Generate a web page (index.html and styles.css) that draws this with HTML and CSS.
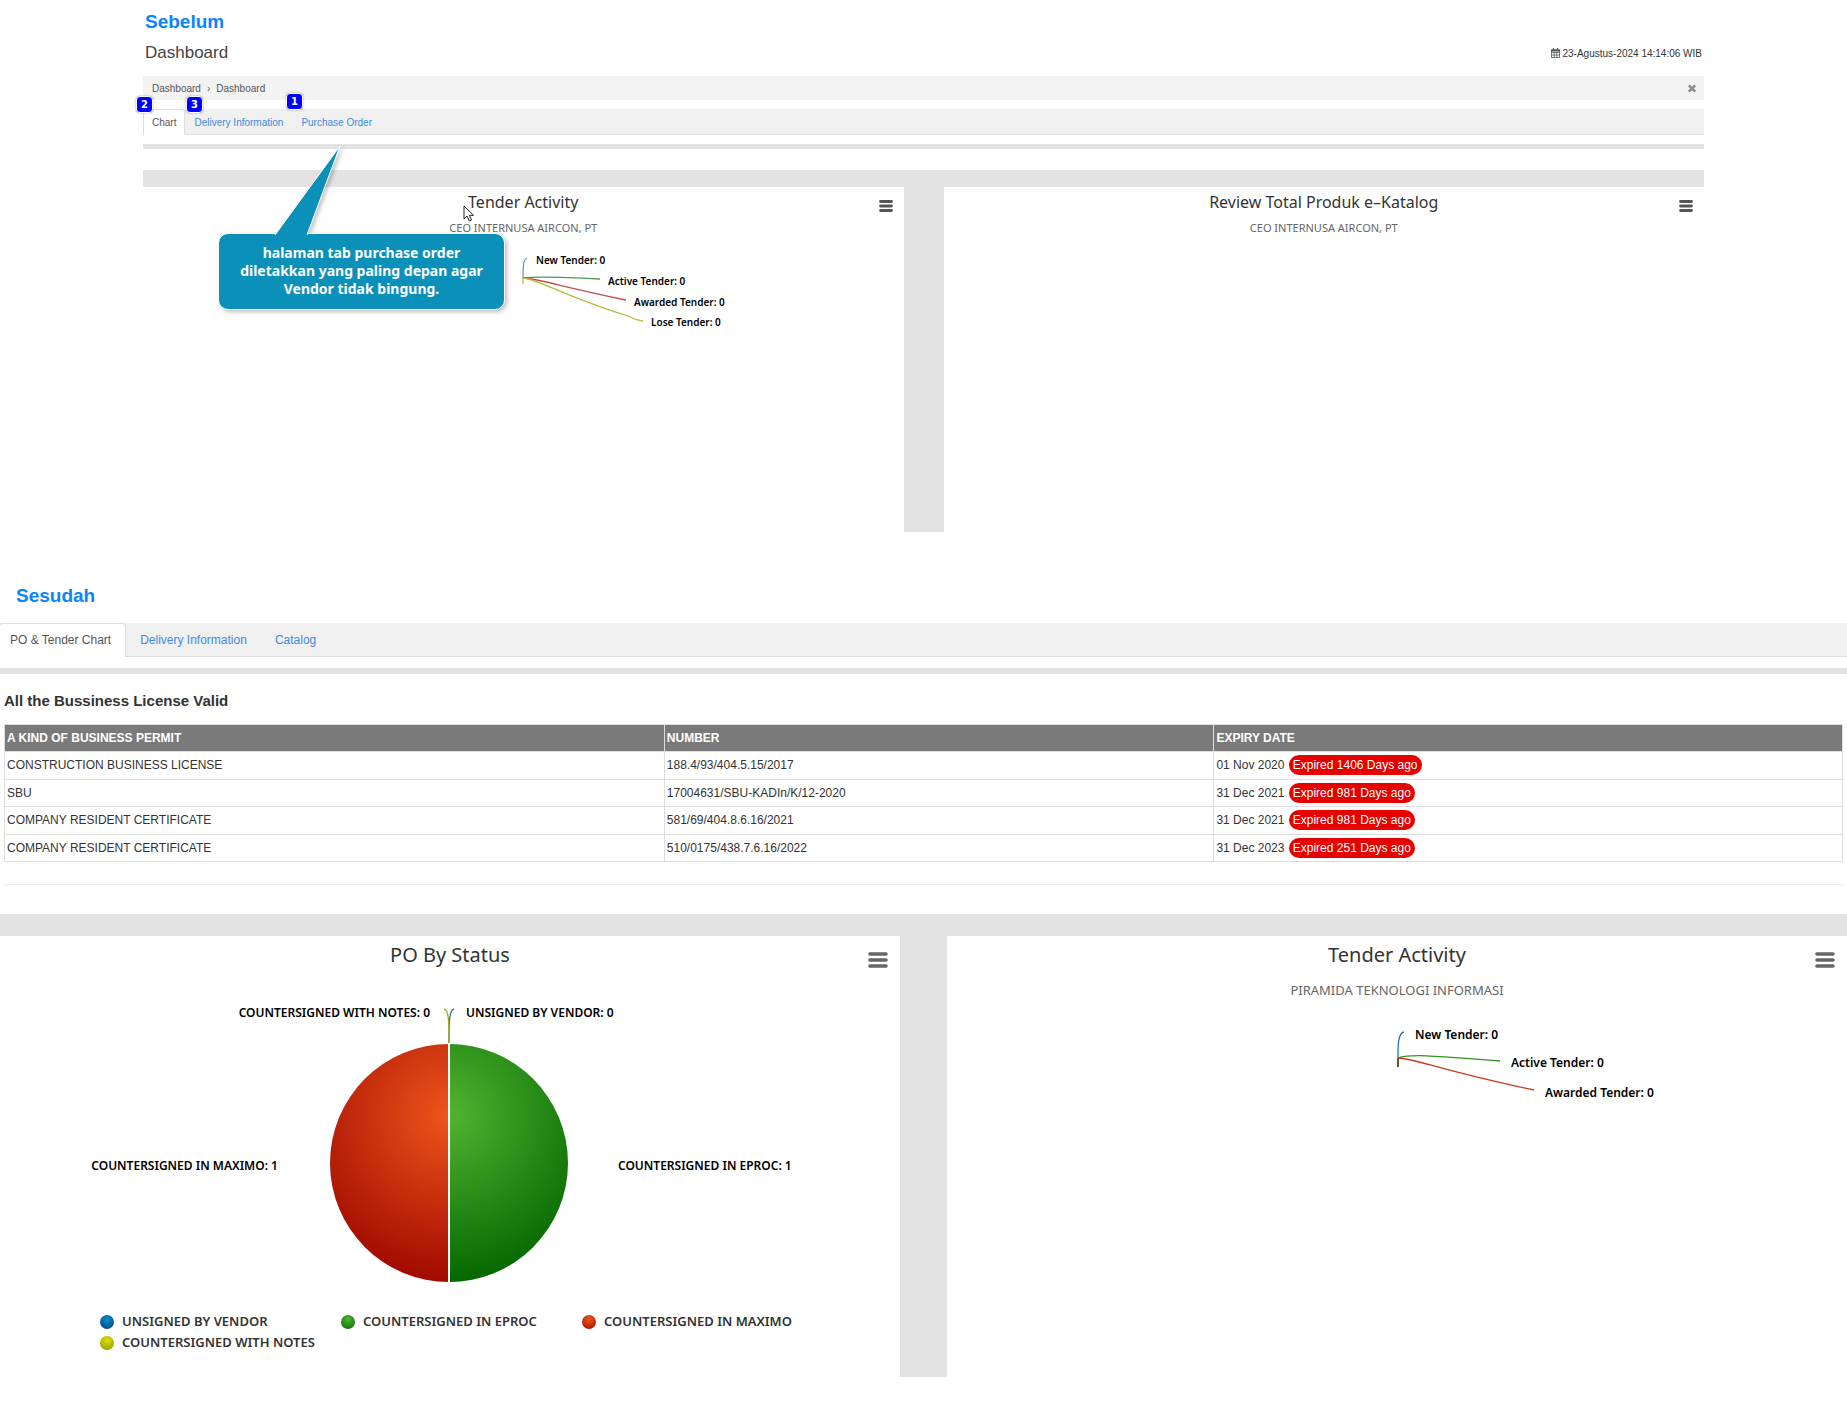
FILE: index.html
```html
<!DOCTYPE html>
<html lang="id">
<head>
<meta charset="utf-8">
<meta name="viewport" content="width=device-width, initial-scale=1">
<title>Dashboard</title>
<link rel="stylesheet" href="styles.css">
</head>
<body>
<section class="before">
  <h2 class="stage">Sebelum</h2>
  <header class="page-head">
    <h1 class="page-title">Dashboard</h1>
    <p class="clock">
      <svg class="calendar" width="9" height="10" viewBox="0 0 9 10" aria-hidden="true"><path d="M.5 2h8v7.500h-8zM.5 4.500h8M.5 7h8M3.200 4v5.500M5.800 4v5.500" fill="none" stroke="#555" stroke-width=".8"/><path d="M0 1.500h9v2H0z" fill="#555"/><path d="M2.500 0v2.500M6.500 0v2.500" stroke="#555" stroke-width="1.200"/></svg>
      <span>23-Agustus-2024 14:14:06 WIB</span>
    </p>
  </header>
  <nav class="crumbs" aria-label="Breadcrumb">
    <span>Dashboard</span><span class="crumb-sep">›</span><span>Dashboard</span>
    <button class="close" type="button" aria-label="Close"><svg width="10" height="9" viewBox="0 0 10 9"><path d="M1.800 1.300l6.400 6.400M8.200 1.300L1.800 7.700" stroke="#8c8c8c" stroke-width="2.600"/></svg></button>
  </nav>
  <nav class="tabs tabs-small">
    <a class="tab active" href="#chart">Chart</a>
    <a class="tab" href="#delivery">Delivery Information</a>
    <a class="tab" href="#po">Purchase Order</a>
    <span class="step step-two">2</span>
    <span class="step step-three">3</span>
    <span class="step step-one">1</span>
    <div class="callout">
      <svg class="callout-tail" width="72" height="94" viewBox="0 0 72 94" aria-hidden="true"><path d="M2 93L67 4L34 93" fill="#0a90b9" stroke="#fff"/></svg>
      <p class="callout-text">halaman tab purchase order diletakkan yang paling depan agar Vendor tidak bingung.</p>
    </div>
    <svg class="cursor" width="12" height="18" viewBox="0 0 12 18" aria-hidden="true"><path d="M1 1v13l3-3 2.300 5 2.200-1-2.200-4.700h4.200z" fill="#fff" stroke="#222"/></svg>
  </nav>
  <div class="stripe"></div>
  <div class="charts charts-small">
    <article class="card">
      <h3 class="card-title">Tender Activity</h3>
      <p class="card-sub">CEO INTERNUSA AIRCON, PT</p>
      <button class="menu" type="button" aria-label="Chart menu"><svg width="14" height="12" viewBox="0 0 14 12"><path d="M1.500 1.500h11M1.500 6h11M1.500 10.500h11" stroke="#555" stroke-width="2.800" stroke-linecap="round"/></svg></button>
      <svg class="plot" width="500" height="90" viewBox="0 0 500 90">
        <path d="M250 33v6" stroke="#a5a52c" fill="none"/>
        <path d="M254 13C250 14 250 24 250 33" stroke="#3c78a5" fill="none"/>
        <path d="M250 33C264 31 290 32 327 34" stroke="#4d9a55" stroke-width="1.300" fill="none"/>
        <path d="M250 33C262 33 290 42 353 55" stroke="#b9504a" stroke-width="1.300" fill="none"/>
        <path d="M250 33C262 33 298 54 355 71Q362 75 370 76" stroke="#b5bd3c" stroke-width="1.300" fill="none"/>
        <g class="plot-labels">
          <text x="263" y="19">New Tender: 0</text>
          <text x="335" y="40">Active Tender: 0</text>
          <text x="361" y="61">Awarded Tender: 0</text>
          <text x="378" y="81">Lose Tender: 0</text>
        </g>
      </svg>
    </article>
    <article class="card">
      <h3 class="card-title">Review Total Produk e–Katalog</h3>
      <p class="card-sub">CEO INTERNUSA AIRCON, PT</p>
      <button class="menu" type="button" aria-label="Chart menu"><svg width="14" height="12" viewBox="0 0 14 12"><path d="M1.500 1.500h11M1.500 6h11M1.500 10.500h11" stroke="#555" stroke-width="2.800" stroke-linecap="round"/></svg></button>
    </article>
  </div>
</section>

<section class="after">
  <h2 class="stage">Sesudah</h2>
  <nav class="tabs tabs-large">
    <a class="tab active" href="#po-chart">PO &amp; Tender Chart</a>
    <a class="tab" href="#delivery-info">Delivery Information</a>
    <a class="tab" href="#catalog">Catalog</a>
  </nav>
  <div class="stripe"></div>
  <div class="license">
    <h3 class="license-title">All the Bussiness License Valid</h3>
    <table class="permits">
      <thead>
        <tr><th class="col-kind">A KIND OF BUSINESS PERMIT</th><th class="col-number">NUMBER</th><th>EXPIRY DATE</th></tr>
      </thead>
      <tbody>
        <tr><td>CONSTRUCTION BUSINESS LICENSE</td><td>188.4/93/404.5.15/2017</td><td>01 Nov 2020 <span class="expired">Expired 1406 Days ago</span></td></tr>
        <tr><td>SBU</td><td>17004631/SBU-KADIn/K/12-2020</td><td>31 Dec 2021 <span class="expired">Expired 981 Days ago</span></td></tr>
        <tr><td>COMPANY RESIDENT CERTIFICATE</td><td>581/69/404.8.6.16/2021</td><td>31 Dec 2021 <span class="expired">Expired 981 Days ago</span></td></tr>
        <tr><td>COMPANY RESIDENT CERTIFICATE</td><td>510/0175/438.7.6.16/2022</td><td>31 Dec 2023 <span class="expired">Expired 251 Days ago</span></td></tr>
      </tbody>
    </table>
    <hr class="rule">
  </div>
  <div class="charts charts-large">
    <article class="card">
      <h3 class="card-title">PO By Status</h3>
      <button class="menu" type="button" aria-label="Chart menu"><svg width="20" height="16" viewBox="0 0 20 16"><path d="M2 2h16M2 8h16M2 14h16" stroke="#666" stroke-width="3.600" stroke-linecap="round"/></svg></button>
      <svg class="plot pie" width="760" height="300" viewBox="0 0 760 300">
        <defs>
          <radialGradient id="green" gradientUnits="userSpaceOnUse" cx="379" cy="125" r="167"><stop offset="0" stop-color="#50b432"/><stop offset="1" stop-color="#046800"/></radialGradient>
          <radialGradient id="red" gradientUnits="userSpaceOnUse" cx="379" cy="125" r="167"><stop offset="0" stop-color="#ed561b"/><stop offset="1" stop-color="#a10a00"/></radialGradient>
        </defs>
        <path d="M379 54a119 119 0 0 1 0 238z" fill="url(#green)"/>
        <path d="M379 54a119 119 0 0 0 0 238z" fill="url(#red)"/>
        <path d="M379 53v240" stroke="#fff" stroke-width="2"/>
        <path d="M384 19C379 20 379 33 379 53" stroke="#2277a8" stroke-width="1.300" fill="none"/>
        <path d="M374 19C379 20 379 33 379 53" stroke="#a8aa1a" stroke-width="1.300" fill="none"/>
        <g class="plot-labels">
          <text x="360" y="27" text-anchor="end">COUNTERSIGNED WITH NOTES: 0</text>
          <text x="396" y="27">UNSIGNED BY VENDOR: 0</text>
          <text x="208" y="180" text-anchor="end">COUNTERSIGNED IN MAXIMO: 1</text>
          <text x="548" y="180">COUNTERSIGNED IN EPROC: 1</text>
        </g>
      </svg>
      <ul class="legend">
        <li class="key key-blue">UNSIGNED BY VENDOR</li>
        <li class="key key-green">COUNTERSIGNED IN EPROC</li>
        <li class="key key-red">COUNTERSIGNED IN MAXIMO</li>
        <li class="key key-yellow">COUNTERSIGNED WITH NOTES</li>
      </ul>
    </article>
    <article class="card">
      <h3 class="card-title">Tender Activity</h3>
      <p class="card-sub">PIRAMIDA TEKNOLOGI INFORMASI</p>
      <button class="menu" type="button" aria-label="Chart menu"><svg width="20" height="16" viewBox="0 0 20 16"><path d="M2 2h16M2 8h16M2 14h16" stroke="#666" stroke-width="3.600" stroke-linecap="round"/></svg></button>
      <svg class="plot" width="600" height="100" viewBox="0 0 600 100">
        <path d="M301 43v9" stroke="#7d4a23" stroke-width="2" fill="none"/>
        <path d="M307 17C301 18 301 30 301 43" stroke="#2277b0" stroke-width="1.300" fill="none"/>
        <path d="M301 43C315 38 350 42 403 46" stroke="#30931f" stroke-width="1.300" fill="none"/>
        <path d="M301 43C316 43 345 56 437 75" stroke="#c93a1c" stroke-width="1.300" fill="none"/>
        <g class="plot-labels">
          <text x="318" y="24">New Tender: 0</text>
          <text x="414" y="52">Active Tender: 0</text>
          <text x="448" y="82">Awarded Tender: 0</text>
        </g>
      </svg>
    </article>
  </div>
</section>
</body>
</html>
```
FILE: styles.css
```css
* { box-sizing: border-box; }

body {
  margin: 0;
  background: #fff;
  color: #333;
  font-family: "Liberation Sans", Arial, sans-serif;
  font-size: 12px;
}

h1, h2, h3, p, ul { margin: 0; padding: 0; }

button {
  padding: 0;
  border: 0;
  background: none;
  cursor: pointer;
}

button svg { display: block; }

.stage {
  color: #0a84ff;
  font-size: 19px;
  line-height: 24px;
}

.stripe { background: #e3e3e3; }

/* Before */
.before {
  margin: 0 143px;
  padding-top: 10px;
  font-size: 10px;
}

.before .stage { padding-left: 2px; }

.page-head {
  display: flex;
  justify-content: space-between;
  align-items: center;
  margin: 7px 0 11px;
  padding: 0 2px;
}

.page-title {
  color: #444;
  font-size: 17px;
  font-weight: 400;
  line-height: 24px;
}

.clock {
  display: flex;
  align-items: center;
  gap: 2px;
}

.crumbs {
  display: flex;
  align-items: center;
  gap: 6px;
  height: 24px;
  padding: 0 7px 0 9px;
  background: #f3f3f3;
  color: #555;
}

.close { margin-left: auto; }

.tabs {
  display: flex;
  border-bottom: 1px solid #ddd;
  background: #f0f0f0;
}

.tab {
  border: 1px solid transparent;
  border-bottom: 0;
  color: #428bdc;
  text-decoration: none;
}

.tab.active {
  margin-bottom: -1px;
  border-color: #ddd;
  border-radius: 3px 3px 0 0;
  background: #fff;
  color: #555;
}

.tabs-small {
  position: relative;
  height: 26px;
  margin-top: 9px;
}

.tabs-small .tab {
  padding: 0 8px;
  line-height: 25px;
}

.before .stripe {
  height: 5px;
  margin: 9px 0 21px;
}

.step {
  position: absolute;
  top: -13px;
  width: 17px;
  height: 17px;
  border: 1px solid #fff;
  border-radius: 4px;
  background: #00f;
  box-shadow: 0 0 2px #999;
  color: #fff;
  font: 700 10px/15px "DejaVu Sans", sans-serif;
  text-align: center;
}

.step-two { left: -7px; }
.step-three { left: 43px; }
.step-one { top: -16px; left: 143px; }

.callout {
  position: absolute;
  top: 124px;
  left: 75px;
  z-index: 1;
  width: 287px;
  filter: drop-shadow(2px 2px 2px rgba(0, 0, 0, .25));
}

.callout-text {
  padding: 10px 16px 11px;
  border: 1px solid #fff;
  border-radius: 10px;
  background: #0a90b9;
  color: #fff;
  font: 700 14px/18px "Noto Sans", sans-serif;
  text-align: center;
}

.callout-tail {
  position: absolute;
  top: -91px;
  left: 55px;
}

.cursor {
  position: absolute;
  top: 96px;
  left: 320px;
  z-index: 1;
}

/* Chart cards */
.charts {
  display: grid;
  grid-template-columns: 1fr 1fr;
  background: #e3e3e3;
}

.charts-small {
  gap: 40px;
  padding-top: 17px;
}

.card {
  position: relative;
  background: #fff;
  font-family: "Noto Sans", sans-serif;
  text-align: center;
}

.card-title {
  color: #333;
  font-weight: 400;
}

.card-sub { color: #666; }

.menu { position: absolute; }

.plot {
  display: block;
  margin: 0 auto;
}

.plot-labels {
  fill: #000;
  font-weight: 600;
}

.charts-small .card {
  min-height: 345px;
  padding-top: 3px;
}

.charts-small .card-title {
  font-size: 16px;
  line-height: 24px;
}

.charts-small .card-sub {
  margin: 6px 0 9px;
  font-size: 11px;
  line-height: 16px;
}

.charts-small .menu {
  top: 13px;
  right: 11px;
}

.charts-small .plot-labels { font-size: 10px; }

/* After */
.after { padding-top: 52px; }

.after .stage {
  padding-left: 16px;
  margin-bottom: 15px;
}

.tabs-large { height: 34px; }

.tabs-large .tab {
  padding: 0 13px;
  line-height: 32px;
}

.tabs-large .tab.active {
  padding: 0 14px 0 10px;
  border-left: 0;
}

.after .stripe {
  height: 6px;
  margin: 11px 0 17px;
}

.license { padding: 0 4px; }

.license-title {
  margin-bottom: 13px;
  font-size: 15px;
  line-height: 20px;
}

.permits {
  width: 100%;
  border-collapse: collapse;
  table-layout: fixed;
}

.permits th,
.permits td {
  height: 27px;
  padding: 0 2px;
  border: 1px solid #ddd;
  text-align: left;
  vertical-align: top;
  line-height: 26px;
}

.permits tbody tr:nth-child(odd) td { height: 28px; }

.permits th {
  background: #7a7a7a;
  color: #fff;
}

.col-kind { width: 35.9%; }
.col-number { width: 29.9%; }

.expired {
  display: inline-block;
  margin-left: 1px;
  padding: 0 4px;
  border-radius: 10px;
  background: #e60000;
  color: #fff;
  line-height: 20px;
}

.rule {
  margin: 22px 0 29px;
  border: 0;
  border-top: 1px solid #eee;
}

.charts-large {
  gap: 47px;
  padding-top: 22px;
}

.charts-large .card {
  min-height: 441px;
  padding-top: 4px;
}

.charts-large .card-title {
  font-size: 20px;
  line-height: 30px;
}

.charts-large .card-sub {
  margin-top: 10px;
  font-size: 13px;
  line-height: 20px;
}

.charts-large .menu {
  top: 16px;
  right: 12px;
}

.charts-large .plot { margin-top: 15px; }
.charts-large .pie { margin-top: 20px; }
.charts-large .plot-labels { font-size: 12px; }

.legend {
  display: grid;
  grid-template-columns: 241px 241px 218px;
  justify-content: center;
  margin-top: 21px;
  font-size: 13px;
  font-weight: 600;
  line-height: 21px;
  list-style: none;
  text-align: left;
}

.key {
  display: flex;
  align-items: center;
  gap: 8px;
}

.key::before {
  width: 14px;
  height: 14px;
  border-radius: 50%;
  content: "";
}

.key-blue::before { background: radial-gradient(circle at 50% 30%, #058dc7, #00417b); }
.key-green::before { background: radial-gradient(circle at 50% 30%, #50b432, #046800); }
.key-red::before { background: radial-gradient(circle at 50% 30%, #ed561b, #a10a00); }
.key-yellow::before { background: radial-gradient(circle at 50% 30%, #dddf00, #919300); }
```
